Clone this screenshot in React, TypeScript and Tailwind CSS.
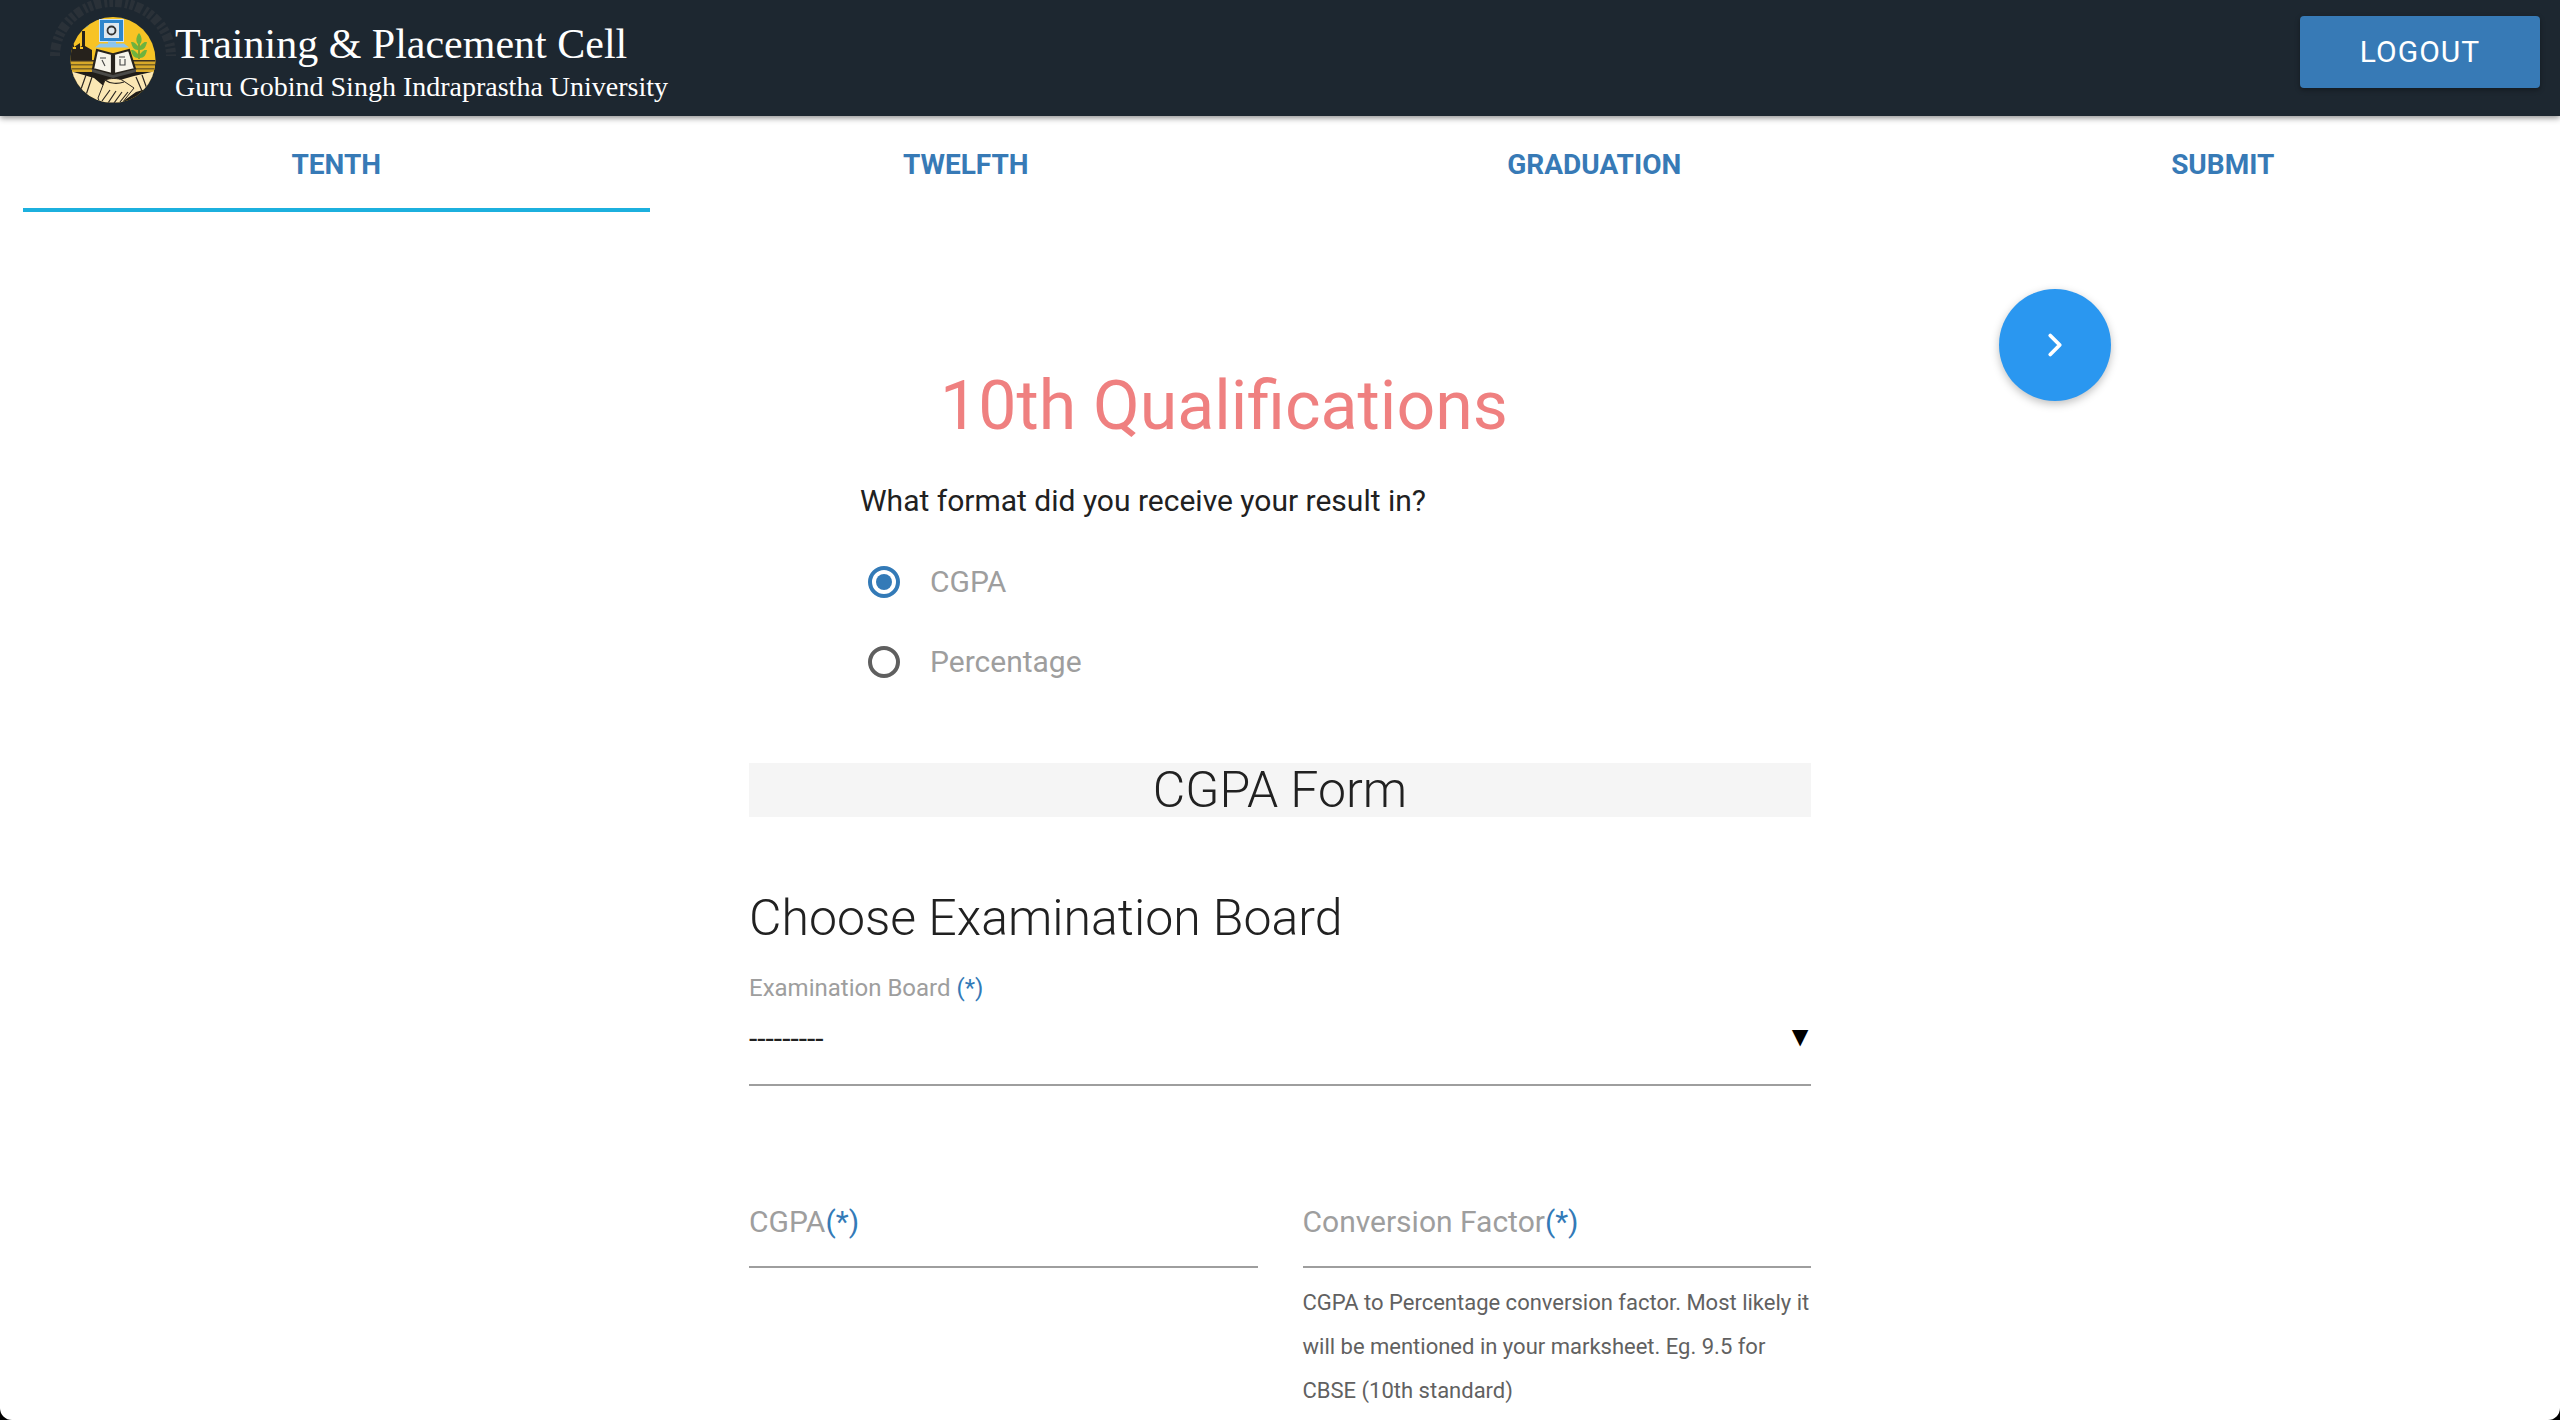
import { ChevronRight } from "lucide-react";

const tabs = ["TENTH", "TWELFTH", "GRADUATION", "SUBMIT"];

function Logo() {
  return (
    <svg viewBox="0 0 130 116" className="w-[130px] h-[116px] shrink-0">
      <defs>
        <clipPath id="seal">
          <ellipse cx="63" cy="60" rx="42.5" ry="43" />
        </clipPath>
      </defs>
      {/* faint script around the seal */}
      <path d="M5 56 A58 54 0 0 1 121 56" fill="none" stroke="#2a3138" strokeWidth="10" strokeDasharray="4 2 7 3 3 2" />
      <g clipPath="url(#seal)">
        <rect x="0" y="0" width="130" height="116" fill="#f7c325" />
        {/* factory */}
        <path d="M18 62 V46 L24 43 V47 L30 43 V47 L32 46 V31 H35 V46 L42 50 V62 Z" fill="#26221c" />
        <path d="M33 28 C35 26 37 27 38 25" stroke="#5aa6d8" strokeWidth="1.5" fill="none" />
        <rect x="23" y="47" width="3" height="2" fill="#f7c325" />
        <rect x="30" y="47" width="3" height="2" fill="#f7c325" />
        {/* fields */}
        <rect x="18" y="60" width="90" height="14" fill="#d8a92a" />
        <rect x="18" y="60" width="90" height="1.5" fill="#3a3020" />
        <rect x="18" y="64" width="90" height="1.5" fill="#7a6322" />
        <rect x="18" y="68" width="90" height="1.5" fill="#7a6322" />
        {/* hands */}
        <rect x="18" y="72" width="90" height="34" fill="#1f1c18" />
        <path d="M20 71 L44 78 L56 88 L50 102 L32 92 L20 88 Z" fill="#fbe7b4" />
        <path d="M106 71 L84 76 L70 80 L56 84 L72 102 L86 92 L106 86 Z" fill="#fbe7b4" />
        <path d="M36 75 L30 92 M42 77 L36 95 M92 75 L97 89 M86 77 L92 91" stroke="#2b2620" strokeWidth="1.2" fill="none" />
        <path d="M55 80 C60 78 68 78 72 80 L84 88 L72 103 H50 L48 98 Z" fill="#fbe7b4" stroke="#2b2620" strokeWidth="1" />
        <path d="M52 101 L60 90 M58 103 L66 91 M64 103 L72 92 M70 102 L78 92 M55 80 C60 84 68 84 74 82" stroke="#2b2620" strokeWidth="1.2" fill="none" />
      </g>
      {/* monitor */}
      <rect x="49.5" y="19.5" width="24" height="22" fill="#2f86cc" stroke="#cfe4f5" strokeWidth="1" />
      <rect x="54" y="23" width="15" height="15" fill="#dfe8ee" />
      <circle cx="61.5" cy="30.5" r="4" fill="none" stroke="#333" strokeWidth="1.8" />
      <rect x="58" y="41.5" width="8" height="2.5" fill="#8fc3e8" />
      <path d="M45 47.5 L50 43.5 H74 L79 47.5 Z" fill="#8cc6ee" />
      {/* book */}
      <path d="M47 50 L62 54 V74 L43 69 Z" fill="#f7f4ea" stroke="#26221c" strokeWidth="2.2" />
      <path d="M79 50 L64 54 V74 L85 69 Z" fill="#f7f4ea" stroke="#26221c" strokeWidth="2.2" />
      <path d="M42 69 L63 75 L86 69 V72 L63 78 L42 72 Z" fill="#4a4a48" />
      <path d="M50 58 H56 M52 60 L55 66 M69 57 H75 M70 59 V65 H75 V59" stroke="#444" strokeWidth="1.1" fill="none" />
      {/* plant */}
      <path d="M89 59 V36" stroke="#5e9a32" strokeWidth="1.5" />
      <path d="M89 33 C85 38 86 43 89 45 C92 43 93 38 89 33 Z M88 46 C84 41 82 42 81 42 C82 47 84 50 88 50 Z M90 46 C94 41 96 42 97 42 C96 47 94 50 90 50 Z M88 54 C84 49 82 50 81 50 C82 55 84 58 88 58 Z M90 54 C94 49 96 50 97 50 C96 55 94 58 90 58 Z" fill="#6db33f" />
    </svg>
  );
}

function Req() {
  return <span className="text-[#337ab7]">(*)</span>;
}

export default function App() {
  return (
    <div className="bg-black">
      <div className="relative h-[1420px] overflow-hidden rounded-b-[12px] bg-white font-['Roboto',sans-serif]">
        <header className="relative z-10 flex h-[116px] justify-between bg-[#1d2730] pl-[50px] pr-[20px] shadow-[0_2px_6px_rgba(0,0,0,0.45)]">
          <div className="flex items-start">
            <Logo />
            <div className="-ml-[5px] mt-[20px] font-['Liberation_Serif',serif] text-white">
              <div className="text-[42px] leading-[48px]">Training &amp; Placement Cell</div>
              <div className="mt-[2px] text-[28px] leading-[34px]">Guru Gobind Singh Indraprastha University</div>
            </div>
          </div>
          <button className="mt-[16px] h-[72px] w-[240px] rounded-[4px] bg-[#377ab6] pb-[2px] text-[30px] tracking-[1px] text-white shadow-[0_2px_5px_rgba(0,0,0,0.35)]">
            LOGOUT
          </button>
        </header>

        <nav className="grid grid-cols-4 px-[23px]">
          {tabs.map((t, i) => (
            <div
              key={t}
              className={`flex h-[96px] items-start justify-center border-b-4 pt-[31px] text-[28px] font-bold leading-[36px] text-[#377ab6] ${
                i === 0 ? "mr-[2px] border-[#1cb0de]" : "border-transparent"
              }`}
            >
              {t}
            </div>
          ))}
        </nav>

        <button className="absolute left-[1999px] top-[289px] flex h-[112px] w-[112px] items-center justify-center rounded-full bg-[#2a97f0] text-white shadow-[0_3px_8px_rgba(0,0,0,0.25)]">
          <ChevronRight size={38} strokeWidth={2.4} />
        </button>

        <main className="mx-auto w-[1062px]">
          <h1 className="ml-[191px] mt-[154px] text-[68px] leading-[80px] text-[#ef8080]">10th Qualifications</h1>
          <p className="ml-[111px] mt-[35px] text-[30px] leading-[40px] text-[#212121]">
            What format did you receive your result in?
          </p>

          <div className="ml-[119px] mt-[41px] flex flex-col gap-[40px] text-[30px] leading-[40px] text-[#9e9e9e]">
            <label className="flex items-center gap-[30px]">
              <span className="flex h-[32px] w-[32px] items-center justify-center rounded-full border-[4px] border-[#337ab7]">
                <span className="h-[16px] w-[16px] rounded-full bg-[#337ab7]" />
              </span>
              CGPA
            </label>
            <label className="flex items-center gap-[30px]">
              <span className="h-[32px] w-[32px] rounded-full border-[4px] border-[#5f5f5f]" />
              Percentage
            </label>
          </div>

          <div className="mt-[81px] flex h-[54px] items-center justify-center bg-[#f5f5f5] text-[50px] font-light text-[#212121]">
            CGPA Form
          </div>

          <h2 className="mt-[69px] text-[50px] font-light leading-[64px] text-[#212121]">Choose Examination Board</h2>

          <div className="mt-[22px] text-[24px] leading-[32px] text-[#9e9e9e]">
            Examination Board <Req />
          </div>
          <div className="flex h-[82px] items-center justify-between border-b-2 border-[#9e9e9e] pb-[12px] text-[30px] text-[#212121]">
            <span>---------</span>
            <span className="-mr-[3px] pb-[2px] text-[28px] text-black">▼</span>
          </div>

          <div className="mt-[110px] grid grid-cols-2 gap-[45px]">
            <div>
              <div className="h-[72px] border-b-2 border-[#9e9e9e] pt-[6px] text-[30px] leading-[40px] text-[#9e9e9e]">
                CGPA<Req />
              </div>
            </div>
            <div>
              <div className="h-[72px] border-b-2 border-[#9e9e9e] pt-[6px] text-[30px] leading-[40px] text-[#9e9e9e]">
                Conversion Factor<Req />
              </div>
              <p className="mt-[13px] text-[22px] leading-[44px] text-[#616161]">
                CGPA to Percentage conversion factor. Most likely it will be mentioned in your marksheet. Eg. 9.5 for CBSE (10th standard)
              </p>
            </div>
          </div>
        </main>
      </div>
    </div>
  );
}
